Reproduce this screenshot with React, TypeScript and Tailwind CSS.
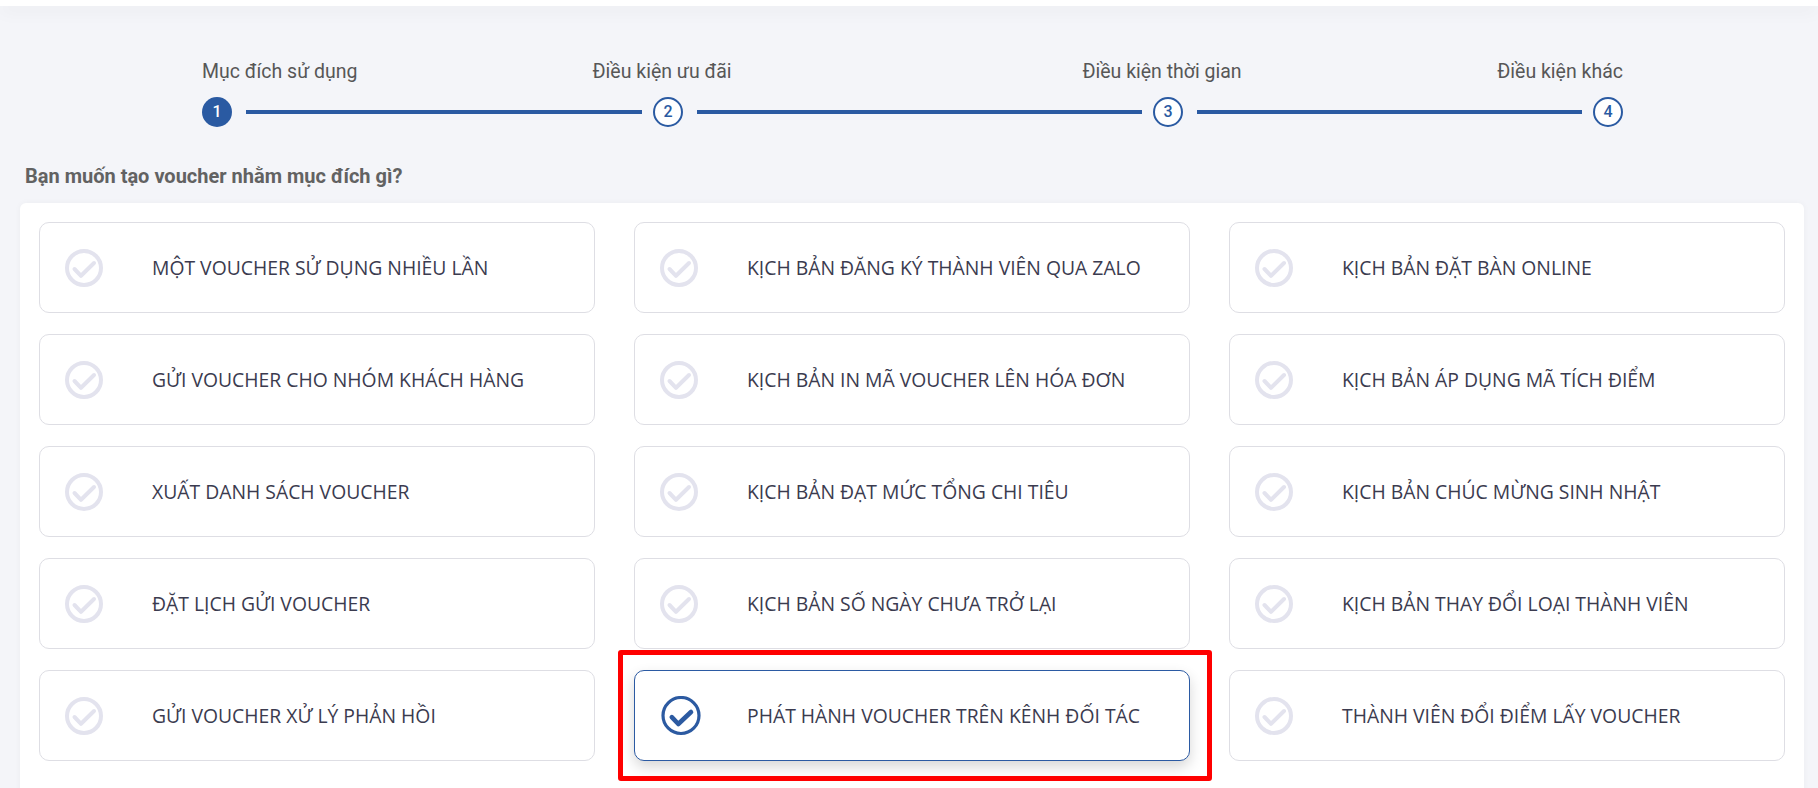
import React from "react";

const steps = [
  { n: 1, label: "Mục đích sử dụng", align: "items-start", shift: "", active: true },
  { n: 2, label: "Điều kiện ưu đãi", align: "items-center", shift: "mr-[12px]", active: false },
  { n: 3, label: "Điều kiện thời gian", align: "items-center", shift: "mr-[12px]", active: false },
  { n: 4, label: "Điều kiện khác", align: "items-end", shift: "", active: false },
];

const lineWidths = ["w-[421px]", "w-[470px]", "w-[410px]"];

const options = [
  "MỘT VOUCHER SỬ DỤNG NHIỀU LẦN",
  "KỊCH BẢN ĐĂNG KÝ THÀNH VIÊN QUA ZALO",
  "KỊCH BẢN ĐẶT BÀN ONLINE",
  "GỬI VOUCHER CHO NHÓM KHÁCH HÀNG",
  "KỊCH BẢN IN MÃ VOUCHER LÊN HÓA ĐƠN",
  "KỊCH BẢN ÁP DỤNG MÃ TÍCH ĐIỂM",
  "XUẤT DANH SÁCH VOUCHER",
  "KỊCH BẢN ĐẠT MỨC TỔNG CHI TIÊU",
  "KỊCH BẢN CHÚC MỪNG SINH NHẬT",
  "ĐẶT LỊCH GỬI VOUCHER",
  "KỊCH BẢN SỐ NGÀY CHƯA TRỞ LẠI",
  "KỊCH BẢN THAY ĐỔI LOẠI THÀNH VIÊN",
  "GỬI VOUCHER XỬ LÝ PHẢN HỒI",
  "PHÁT HÀNH VOUCHER TRÊN KÊNH ĐỐI TÁC",
  "THÀNH VIÊN ĐỔI ĐIỂM LẤY VOUCHER",
];

const SELECTED = 13;

function CheckIcon({ selected }: { selected: boolean }) {
  if (selected) {
    return (
      <svg width="40" height="40" viewBox="0 0 40 40" fill="none" className="shrink-0 translate-x-[2px]">
        <circle cx="20" cy="19.5" r="18" stroke="#2c5aa1" strokeWidth="3.2" />
        <path d="M10.8 21.2 L17.3 28 L30 16" stroke="#2c5aa1" strokeWidth="4.6" strokeLinecap="round" strokeLinejoin="round" />
      </svg>
    );
  }
  return (
    <svg width="40" height="40" viewBox="0 0 40 40" fill="none" className="shrink-0">
      <circle cx="20" cy="20" r="17" stroke="#e3e3ee" strokeWidth="4" />
      <path d="M10.5 21 L17 27.8 L30 15" stroke="#e3e3ee" strokeWidth="4" strokeLinecap="round" strokeLinejoin="round" />
    </svg>
  );
}

export default function App() {
  return (
    <div className="min-h-screen bg-[#f4f5f9] font-['Roboto',sans-serif]">
      <div className="h-[6px] bg-white shadow-[0_4px_18px_rgba(0,0,0,0.07)]" />

      {/* stepper */}
      <div className="ml-[202px] flex pt-[53px]">
        {steps.map((s, i) => (
          <React.Fragment key={s.n}>
            <div className={`flex w-[30px] flex-col ${s.align}`}>
              <span className={`mb-[13px] whitespace-nowrap text-[19.5px] leading-[25px] text-[#575757] ${s.shift}`}>
                {s.label}
              </span>
              {s.active ? (
                <div className="flex h-[30px] w-[30px] items-center justify-center rounded-full bg-[#2a5aa2] text-[16px] font-medium text-white">
                  {s.n}
                </div>
              ) : (
                <div className="flex h-[30px] w-[30px] items-center justify-center rounded-full border-2 border-[#2a5aa2] bg-white text-[16px] font-medium text-[#2a5aa2]">
                  {s.n}
                </div>
              )}
            </div>
            {i < 3 && (
              <div className={`flex ${lineWidths[i]} self-end pb-[13px] pl-[14px] pr-[11px]`}>
                <div className="h-1 w-full bg-[#2a5aa2]" />
              </div>
            )}
          </React.Fragment>
        ))}
      </div>

      <h2 className="ml-[25px] mt-[35px] text-[20px] font-bold leading-7 text-[#626262]">
        Bạn muốn tạo voucher nhằm mục đích gì?
      </h2>

      <div className="mx-[20px] mt-[13px] mr-[14px] rounded-t-md bg-white px-[19px] pb-8 pt-[19px] shadow-[0_0_6px_rgba(0,0,0,0.04)]">
        <div className="grid grid-cols-3 gap-x-[39px] gap-y-[21px]">
          {options.map((o, i) => {
            const sel = i === SELECTED;
            return (
              <div key={o} className="relative">
                <div
                  className={`flex h-[91px] items-center rounded-[10px] border bg-white pl-6 ${
                    sel ? "border-[#2b5aa3] shadow-[0_6px_14px_rgba(0,0,0,0.16)]" : "border-[#dedee4]"
                  }`}
                >
                  <CheckIcon selected={sel} />
                  <span className="ml-12 font-['Open_Sans',sans-serif] text-[19.35px] text-[#3b3b4f]">{o}</span>
                </div>
                {sel && (
                  <div className="pointer-events-none absolute -bottom-5 -left-4 -right-[22px] -top-5 rounded-[3px] border-[5px] border-[#ff0000]" />
                )}
              </div>
            );
          })}
        </div>
      </div>
    </div>
  );
}
